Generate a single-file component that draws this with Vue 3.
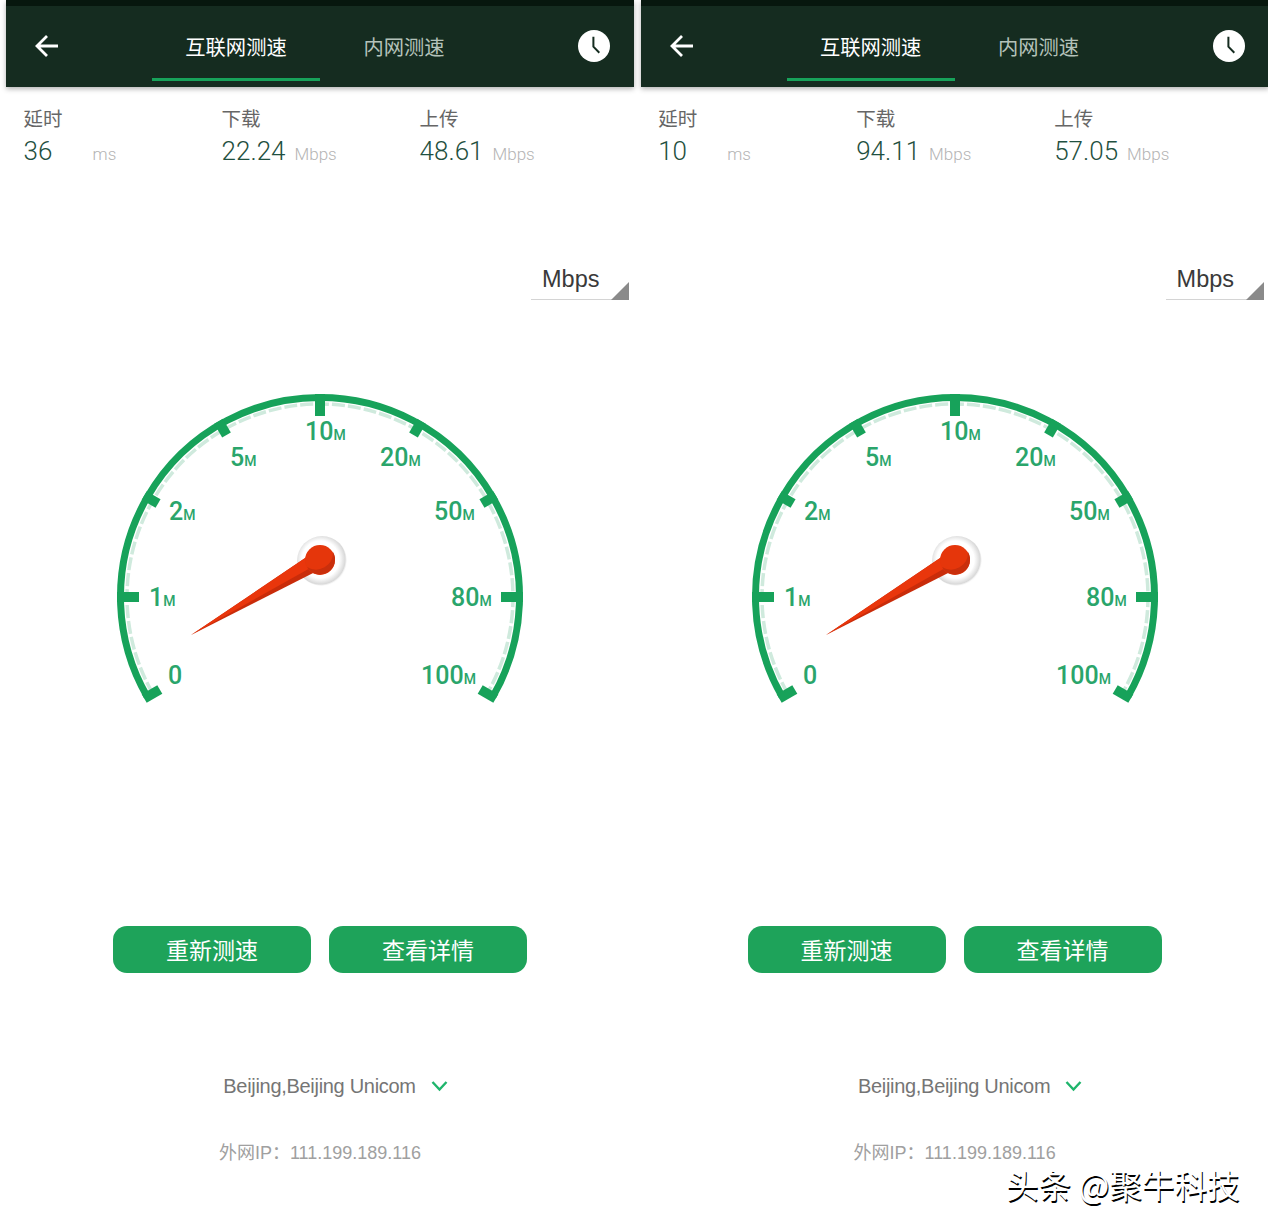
<template>
  <div class="page">
    <section v-for="p in panels" :key="p.ping" class="panel">
      <header class="head">
        <div class="strip"></div>
        <div class="bar">
          <svg class="back" width="26" height="26" viewBox="0 0 26 26">
            <path d="M24 13H3M13 3L3 13l10 10" fill="none" stroke="#fff" stroke-width="2.8" />
          </svg>
          <div class="tabs">
            <div class="tab on">互联网测速</div>
            <div class="tab">内网测速</div>
          </div>
          <svg class="clock" width="32" height="32" viewBox="0 0 32 32">
            <circle cx="16" cy="16" r="16" fill="#fff" />
            <path d="M15.4 6.7v10l5.9 6" fill="none" stroke="#152c20" stroke-width="2" />
          </svg>
        </div>
      </header>

      <div class="stats">
        <div class="stat">
          <div class="name">延时</div>
          <div class="line"><span class="num fixed">{{ p.ping }}</span><span class="unit">ms</span></div>
        </div>
        <div class="stat">
          <div class="name">下载</div>
          <div class="line"><span class="num">{{ p.down }}</span><span class="unit">Mbps</span></div>
        </div>
        <div class="stat">
          <div class="name">上传</div>
          <div class="line"><span class="num">{{ p.up }}</span><span class="unit">Mbps</span></div>
        </div>
      </div>

      <div class="picker"><span>Mbps</span><i class="corner"></i></div>

      <svg class="gauge" width="420" height="330" viewBox="0 0 420 330">
        <defs>
          <radialGradient :id="'halo' + p.ping" cx="0.47" cy="0.47" r="0.53">
            <stop offset="0.7" stop-color="#fff" />
            <stop offset="0.8" stop-color="#efefef" />
            <stop offset="0.93" stop-color="#d9d9d9" />
            <stop offset="1" stop-color="#e8e8e8" stop-opacity="0.1" />
          </radialGradient>
        </defs>
        <path :d="arc(193)" fill="none" stroke="#cfeadd" stroke-width="3.5" stroke-dasharray="13 3" />
        <path :d="arc(199.5)" fill="none" stroke="#17a25a" stroke-width="7" />
        <line
          v-for="t in ticks"
          :key="t.label"
          :x1="t.x1"
          :y1="t.y1"
          :x2="t.x2"
          :y2="t.y2"
          stroke="#17a25a"
          stroke-width="10"
        />
        <text v-for="t in ticks" :key="'l' + t.label" :x="t.tx" :y="t.ty" class="tick-num">{{ t.label }}<tspan v-if="t.label !== '0'" class="tick-m">M</tspan></text>
        <circle cx="212" cy="177" r="25" :fill="'url(#halo' + p.ping + ')'" />
        <polygon points="81,251 204,168 213,184" fill="#c92c0a" />
        <polygon points="81,251 204,168 211,178" fill="#e9360c" />
        <circle cx="210" cy="176" r="15" fill="#e5360b" />
        <path d="M197 183a15 15 0 0 0 26-15a17 17 0 0 1-26 15z" fill="#c92f0c" />
      </svg>

      <div class="btns">
        <div class="btn">重新测速</div>
        <div class="btn">查看详情</div>
      </div>

      <div class="place">
        <span>Beijing,Beijing Unicom</span>
        <svg width="17" height="12" viewBox="0 0 17 12">
          <path d="M1.5 2l7 7.5 7-7.5" fill="none" stroke="#1fb56c" stroke-width="2.4" />
        </svg>
      </div>
      <div class="ip">外网IP：111.199.189.116</div>
    </section>
    <div class="mark">头条 @聚牛科技</div>
  </div>
</template>

<script setup>
const panels = [
  { ping: '36', down: '22.24', up: '48.61' },
  { ping: '10', down: '94.11', up: '57.05' },
]

const CX = 210
const CY = 213
const OUTER = 203

// deg measured like a clock-free unit circle, y flipped; label x/y are baseline starts
const marks = [
  { label: '0', deg: 210, len: 18, tx: 58, ty: 300 },
  { label: '1', deg: 180, len: 22, tx: 39, ty: 222 },
  { label: '2', deg: 150, len: 16, tx: 59, ty: 136 },
  { label: '5', deg: 120, len: 16, tx: 120, ty: 82 },
  { label: '10', deg: 90, len: 22, tx: 195, ty: 56 },
  { label: '20', deg: 60, len: 16, tx: 270, ty: 82 },
  { label: '50', deg: 30, len: 16, tx: 324, ty: 136 },
  { label: '80', deg: 0, len: 22, tx: 341, ty: 222 },
  { label: '100', deg: -30, len: 18, tx: 311, ty: 300 },
]

const pt = (r, deg) => {
  const a = (deg * Math.PI) / 180
  return [CX + r * Math.cos(a), CY - r * Math.sin(a)]
}

const ticks = marks.map((m) => {
  const [x1, y1] = pt(OUTER, m.deg)
  const [x2, y2] = pt(OUTER - m.len, m.deg)
  return { ...m, x1, y1, x2, y2 }
})

const arc = (r) => {
  const [sx, sy] = pt(r, 210)
  const [ex, ey] = pt(r, -30)
  return `M${sx} ${sy}A${r} ${r} 0 1 1 ${ex} ${ey}`
}
</script>

<style scoped>
.page {
  position: relative;
  display: flex;
  gap: 6.6px;
  width: 1268px;
  height: 1232px;
  padding-left: 6px;
  box-sizing: border-box;
  overflow: hidden;
  background: #fff;
  font-family: "Liberation Sans", "Noto Sans CJK SC", sans-serif;
}

.panel {
  flex: 0 0 628px;
  display: flex;
  flex-direction: column;
}

.head {
  box-shadow: 0 2px 5px rgba(0, 0, 0, 0.3);
}
.strip {
  height: 6px;
  background: #07170e;
}
.bar {
  display: flex;
  height: 81px;
  background: #152c20;
}
.back {
  margin: 27px 0 0 28px;
}
.tabs {
  display: flex;
  margin-left: 92px;
}
.tab {
  width: 168px;
  height: 75px;
  padding-top: 27px;
  box-sizing: border-box;
  text-align: center;
  font: 400 20.3px/26px "Noto Sans CJK SC", sans-serif;
  color: #b4c2ba;
}
.tab.on {
  color: #fff;
  border-bottom: 3px solid #17a25a;
}
.clock {
  margin: 24px 0 0 90px;
}

.stats {
  display: flex;
  padding: 19px 0 0 17.6px;
}
.stat {
  width: 198px;
}
.name {
  font: 400 19.5px/24px "Noto Sans CJK SC", sans-serif;
  color: #666;
}
.line {
  display: flex;
  align-items: baseline;
  height: 40px;
  margin-top: 4px;
}
.num {
  font: 300 26px/34px Roboto, sans-serif;
  color: #1f5040;
}
.num.fixed {
  width: 69px;
}
.unit {
  margin-left: 9px;
  font: 300 17px/34px Roboto, sans-serif;
  color: #b4b4b4;
}
.num.fixed + .unit {
  margin-left: 0;
}

.picker {
  position: relative;
  align-self: flex-end;
  width: 97px;
  height: 36px;
  margin: 90px 6px 0 0;
  box-sizing: border-box;
  border-bottom: 1.5px solid #d4d4d4;
  padding-left: 11px;
  font: 23.5px/31px "Liberation Sans", sans-serif;
  color: #3a3a3a;
}
.corner {
  position: absolute;
  right: -1px;
  bottom: -1px;
  width: 0;
  height: 0;
  border-left: 18px solid transparent;
  border-bottom: 18px solid #8a8a8a;
}

.gauge {
  align-self: center;
  margin-top: 84px;
}
.tick-num {
  font: 500 25px Roboto, sans-serif;
  fill: #2aa56b;
}
.tick-m {
  font-size: 14px;
}

.btns {
  display: flex;
  justify-content: center;
  gap: 18px;
  margin-top: 212px;
}
.btn {
  width: 198px;
  height: 47px;
  border-radius: 14px;
  background: #1ea35a;
  text-align: center;
  font: 400 23px/47px "Noto Sans CJK SC", sans-serif;
  color: #fff;
}

.place {
  display: flex;
  justify-content: center;
  align-items: center;
  gap: 15px;
  height: 26px;
  margin-top: 100px;
  padding-left: 31px;
  font: 20px/26px "Liberation Sans", sans-serif;
  letter-spacing: -0.3px;
  color: #757575;
}

.ip {
  margin-top: 42px;
  text-align: center;
  font: 400 18px/24px "Liberation Sans", "Noto Sans CJK SC", sans-serif;
  color: #a0a0a0;
}

.mark {
  position: absolute;
  left: 1006px;
  top: 1162px;
  font: 400 32.6px/44px "Noto Sans CJK SC", sans-serif;
  color: #fff;
  text-shadow: 1px 2px 0 #000;
  white-space: nowrap;
}
</style>
